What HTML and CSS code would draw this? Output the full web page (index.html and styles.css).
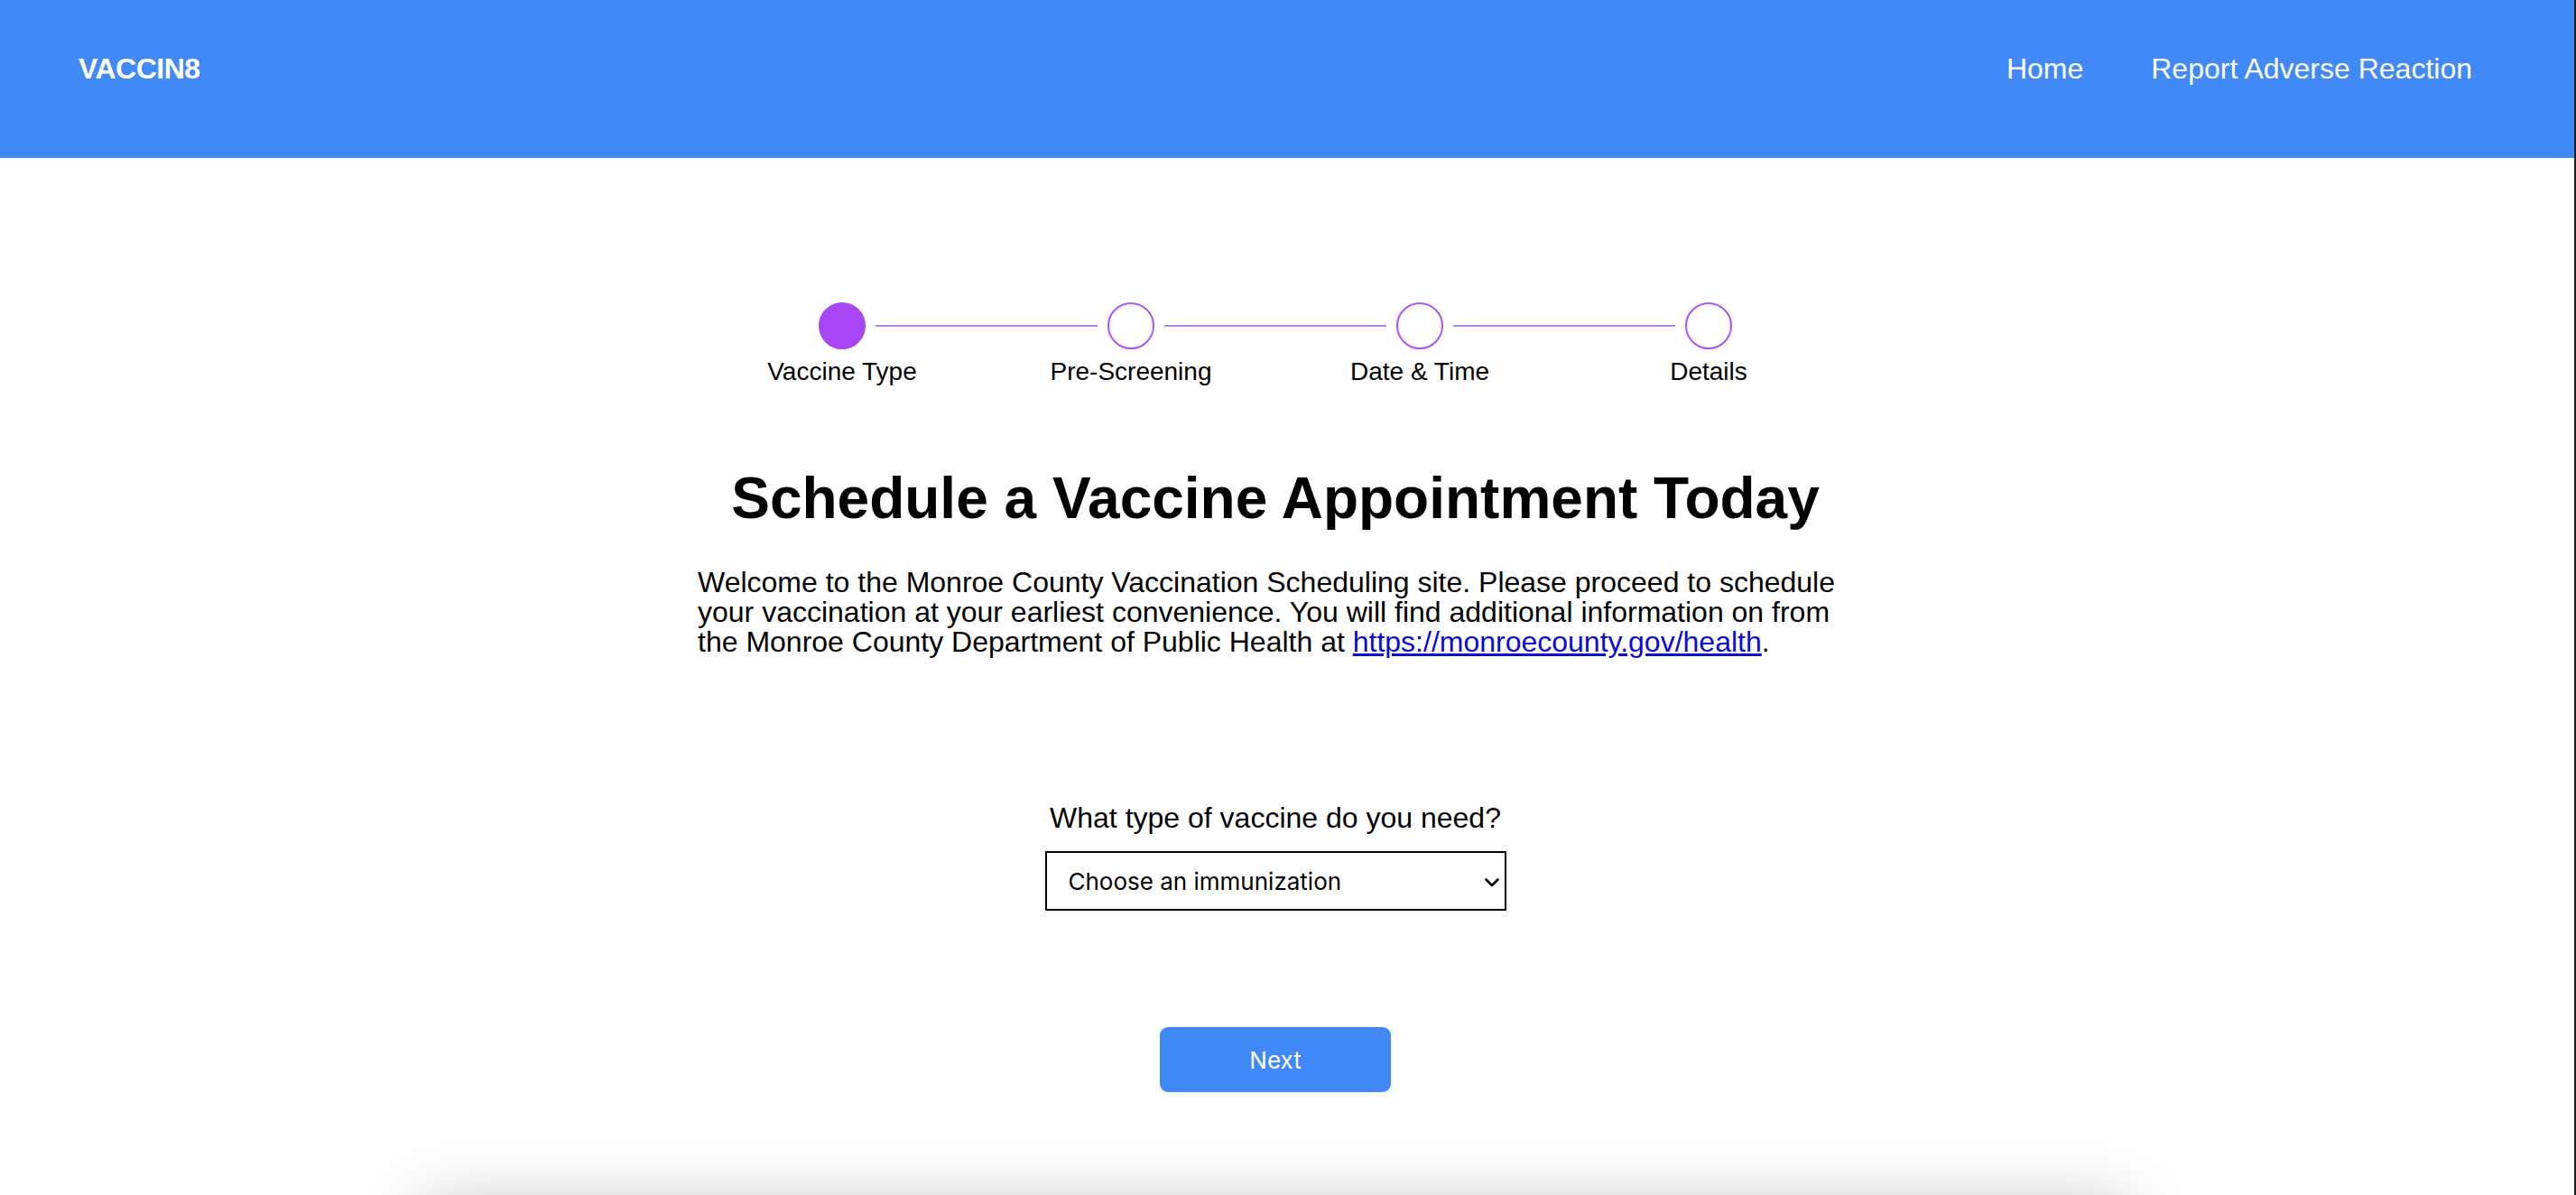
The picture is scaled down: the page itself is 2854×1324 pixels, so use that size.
FILE: index.html
```html
<!DOCTYPE html>
<html lang="en">
<head>
<meta charset="utf-8">
<title>VACCIN8</title>
<link rel="stylesheet" href="styles.css">
</head>
<body>
<div class="page">
  <header class="topbar">
    <div class="logo">VACCIN8</div>
    <nav class="nav">
      <a href="#" class="nav-link">Home</a>
      <a href="#" class="nav-link">Report Adverse Reaction</a>
    </nav>
  </header>
  <main class="main">
    <div class="steps">
      <div class="step-track">
        <span class="dot dot-active"></span>
        <span class="connector"></span>
        <span class="dot"></span>
        <span class="connector"></span>
        <span class="dot"></span>
        <span class="connector"></span>
        <span class="dot"></span>
      </div>
      <div class="step-labels">
        <span>Vaccine Type</span>
        <span>Pre-Screening</span>
        <span>Date &amp; Time</span>
        <span>Details</span>
      </div>
    </div>
    <h1 class="title">Schedule a Vaccine Appointment Today</h1>
    <p class="intro">Welcome to the Monroe County Vaccination Scheduling site. Please proceed to schedule your vaccination at your earliest convenience. You will find additional information on from the Monroe County Department of Public Health at <a href="#">https://monroecounty.gov/health</a>.</p>
    <label class="question" for="vaccine">What type of vaccine do you need?</label>
    <div class="select-wrap">
      <select id="vaccine" class="select">
        <option>Choose an immunization</option>
      </select>
      <svg class="chevron" width="16" height="10" viewBox="0 0 16 10"><path d="M1.5 1.5 L8 8 L14.5 1.5" fill="none" stroke="#000" stroke-width="2.6" stroke-linecap="round" stroke-linejoin="round"/></svg>
    </div>
    <button class="next" type="button">Next</button>
    <div class="card"></div>
  </main>
</div>
</body>
</html>
```

FILE: styles.css
```css
html, body {
  margin: 0;
  padding: 0;
  background: #fff;
}

body {
  font-family: "Liberation Sans", Arial, Helvetica, sans-serif;
  color: #000;
}

.page {
  height: 100vh;
  overflow: hidden;
  border-right: 2px solid #1e1e1e;
  box-sizing: border-box;
}

.topbar {
  height: 175px;
  box-sizing: border-box;
  background: #4189f6;
  display: flex;
  justify-content: space-between;
  align-items: flex-start;
  padding: 58px 113px 0 87px;
}

.logo {
  color: #fff;
  font-weight: bold;
  font-size: 32px;
  letter-spacing: -0.5px;
}

.nav {
  display: flex;
  gap: 75px;
}

.nav-link {
  color: #fff;
  text-decoration: none;
  font-size: 32px;
}

.main {
  display: flex;
  flex-direction: column;
  align-items: center;
  padding: 160px 26px 0 0;
}

.steps {
  width: 1280px;
}

.step-track {
  display: flex;
  justify-content: center;
  align-items: center;
}

.dot {
  width: 52px;
  height: 52px;
  box-sizing: border-box;
  border-radius: 50%;
  border: 2px solid #a855f7;
  background: #fff;
  flex: none;
}

.dot-active {
  background: #a846f6;
  border-color: #a846f6;
}

.connector {
  width: 246px;
  height: 2px;
  margin: 0 11px;
  background: #b983df;
  flex: none;
}

.step-labels {
  display: grid;
  grid-template-columns: repeat(4, 320px);
  margin-top: 9px;
  font-size: 28px;
  text-align: center;
}

.title {
  margin: 87px 0 0;
  font-size: 64px;
  font-weight: bold;
  line-height: normal;
  text-align: center;
}

.intro {
  width: 1280px;
  margin: 40px 0 0;
  font-size: 32px;
  line-height: 33px;
}

.intro a {
  color: #0b0bd6;
  text-decoration: underline;
}

.question {
  margin-top: 160px;
  font-size: 32px;
  line-height: normal;
}

.select-wrap {
  position: relative;
  margin-top: 18px;
  width: 511px;
  height: 66px;
}

.select {
  appearance: none;
  -webkit-appearance: none;
  width: 100%;
  height: 100%;
  box-sizing: border-box;
  border: 2px solid #000;
  border-radius: 0;
  background: #fff;
  padding: 0 0 0 24px;
  font-family: Inter, "Noto Sans", sans-serif;
  font-size: 26px;
  color: #000;
}

.chevron {
  position: absolute;
  right: 8px;
  top: 30px;
}

.next {
  margin-top: 129px;
  width: 256px;
  height: 72px;
  border: none;
  border-radius: 9px;
  background: #4189f6;
  color: #fff;
  font-family: Inter, "Noto Sans", sans-serif;
  font-size: 26px;
}

.card {
  flex: none;
  margin-top: 124px;
  width: 1900px;
  height: 400px;
  border-radius: 24px;
  background: #fff;
  box-shadow: 0 0 70px rgba(0, 0, 0, 0.24);
}
```
